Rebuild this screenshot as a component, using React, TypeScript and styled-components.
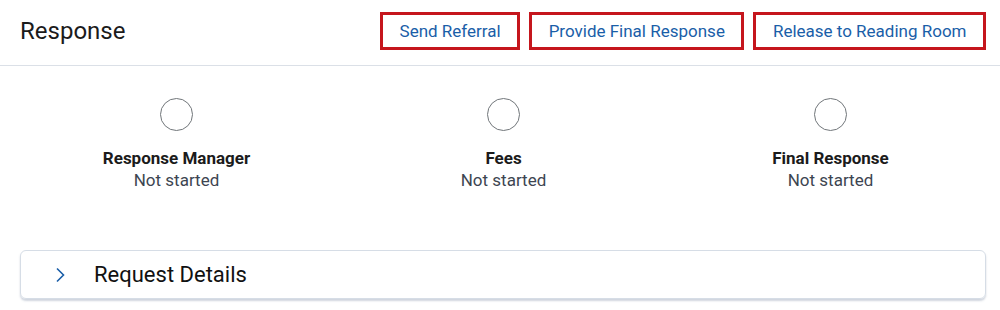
import React from "react";
import styled, { createGlobalStyle } from "styled-components";

const Global = createGlobalStyle`
  html, body { margin: 0; padding: 0; background: #ffffff; }
  body { font-family: Roboto, "Liberation Sans", Arial, sans-serif; }
  * { box-sizing: border-box; }
`;

const Page = styled.div`
  width: 1000px;
  height: 310px;
  overflow: hidden;
  background: #ffffff;
`;

const Header = styled.header`
  height: 66px;
  display: flex;
  align-items: center;
  justify-content: space-between;
  padding: 0 14px 3px 20px;
  border-bottom: 1px solid #dbe0e7;
`;

const Title = styled.h1`
  margin: 0;
  font-size: 24px;
  font-weight: 400;
  color: #1b1b1b;
`;

const Actions = styled.div`
  display: flex;
  gap: 9px;
`;

const ActionButton = styled.button`
  height: 38px;
  padding: 0 16.5px;
  border: 3px solid #c5161d;
  background: #ffffff;
  color: #1a5ea8;
  font-family: Roboto, "Liberation Sans", Arial, sans-serif;
  font-size: 17px;
  cursor: pointer;
`;

const Steps = styled.div`
  display: grid;
  grid-template-columns: repeat(3, 1fr);
  padding: 32px 6px 0 13px;
`;

const Step = styled.div`
  display: flex;
  flex-direction: column;
  align-items: center;
`;

const Circle = styled.div`
  width: 33px;
  height: 33px;
  border-radius: 50%;
  border: 1.5px solid #71767a;
  margin-bottom: 16px;
`;

const StepLabel = styled.div`
  font-size: 17px;
  font-weight: 700;
  color: #1b1b1b;
  line-height: 22px;
`;

const StepStatus = styled.div`
  font-size: 17px;
  color: #3d4551;
  line-height: 22px;
`;

const Accordion = styled.div`
  margin: 59px 14px 0 20px;
  height: 49px;
  border: 1px solid #d6dde6;
  border-radius: 6px;
  box-shadow: 0 2px 2px rgba(120, 135, 160, 0.35);
  display: flex;
  align-items: center;
  padding-left: 34px;
`;

const Chevron = styled.svg`
  width: 10px;
  height: 16px;
  margin-right: 29px;
`;

const AccordionTitle = styled.span`
  font-size: 22px;
  color: #111111;
`;

const steps = [
  { label: "Response Manager", status: "Not started" },
  { label: "Fees", status: "Not started" },
  { label: "Final Response", status: "Not started" },
];

export default function App() {
  return (
    <Page>
      <Global />
      <Header>
        <Title>Response</Title>
        <Actions>
          <ActionButton>Send Referral</ActionButton>
          <ActionButton>Provide Final Response</ActionButton>
          <ActionButton>Release to Reading Room</ActionButton>
        </Actions>
      </Header>
      <Steps>
        {steps.map((s) => (
          <Step key={s.label}>
            <Circle />
            <StepLabel>{s.label}</StepLabel>
            <StepStatus>{s.status}</StepStatus>
          </Step>
        ))}
      </Steps>
      <Accordion>
        <Chevron viewBox="0 0 10 16">
          <path d="M2 1.5 L8.5 8 L2 14.5" fill="none" stroke="#1a5ea8" strokeWidth="1.6" />
        </Chevron>
        <AccordionTitle>Request Details</AccordionTitle>
      </Accordion>
    </Page>
  );
}
